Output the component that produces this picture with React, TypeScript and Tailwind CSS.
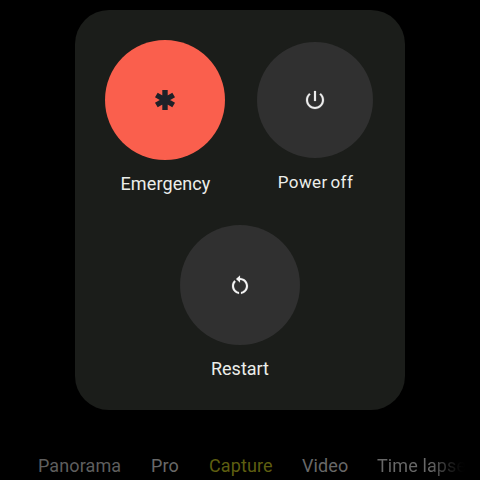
import type { ReactNode } from 'react';
import clsx from 'clsx';

function EmergencyIcon() {
  return (
    <svg viewBox="0 0 24 24" className="w-6 h-6" fill="none" stroke="currentColor" strokeWidth="5.4">
      <path d="M12 2v20M3.34 7l17.32 10M3.34 17L20.66 7" />
    </svg>
  );
}

function PowerIcon() {
  return (
    <svg viewBox="0 0 24 24" className="w-6 h-6" fill="currentColor" stroke="currentColor" strokeWidth="0.2">
      <path d="M13 3h-2v10h2V3zm4.83 2.17l-1.42 1.42C17.99 7.86 19 9.81 19 12c0 3.87-3.13 7-7 7s-7-3.13-7-7c0-2.19 1.01-4.14 2.58-5.42L6.17 5.17C4.23 6.82 3 9.26 3 12c0 4.97 4.03 9 9 9s9-4.03 9-9c0-2.74-1.23-5.18-3.17-6.83z" />
    </svg>
  );
}

function RestartIcon() {
  return (
    <svg viewBox="0 0 24 24" className="w-6 h-6" fill="currentColor" stroke="currentColor" strokeWidth="0.15">
      <path d="M12 5V2.6L8 6l4 3.6V7c3.31 0 6 2.69 6 6 0 2.97-2.17 5.43-5 5.91v2.02c3.95-.49 7-3.85 7-7.93 0-4.42-3.58-8-8-8zm-6 8c0-1.65.67-3.15 1.76-4.24L6.34 7.34C4.9 8.79 4 10.79 4 13c0 4.08 3.05 7.44 7 7.93v-2.02c-2.83-.48-5-2.94-5-5.91z" />
    </svg>
  );
}

type PowerActionProps = {
  label: string;
  circle: string;
  text: string;
  children: ReactNode;
};

function PowerAction({ label, circle, text, children }: PowerActionProps) {
  return (
    <button className="flex w-[120px] flex-col items-center">
      <span className={clsx('flex shrink-0 items-center justify-center rounded-full', circle)}>
        {children}
      </span>
      <span className={clsx('whitespace-nowrap text-[#eceeea]', text)}>{label}</span>
    </button>
  );
}

const modes = [
  { name: 'Panorama', style: 'w-[113px] text-[#5e5e5e]' },
  { name: 'Pro', style: 'w-[58px] text-[#686868]' },
  { name: 'Capture', style: 'w-[93px] text-[#5e5e10]' },
  { name: 'Video', style: 'w-[75px] text-[#686868]' },
  {
    name: 'Time lapse',
    style: 'bg-linear-to-r from-[#686868] from-[54px] to-black to-[92px] bg-clip-text text-transparent',
  },
];

export default function App() {
  return (
    <div className="flex h-screen w-full flex-col items-center overflow-hidden bg-black pt-[10px] font-['Roboto',sans-serif]">
      <div className="h-[400px] w-[330px] shrink-0 rounded-[34px] bg-[#1b1d1a] px-[30px] pt-[30px]">
        <div className="flex h-[185px] justify-between">
          <PowerAction
            label="Emergency"
            circle="h-[120px] w-[120px] bg-[#fa5f4d] text-[#1e2128]"
            text="mt-3 pl-px text-[18px] leading-6 tracking-[0.1px]"
          >
            <EmergencyIcon />
          </PowerAction>
          <PowerAction
            label="Power off"
            circle="mt-[2.4px] h-[116px] w-[116px] bg-[#303030] text-[#eeeeee]"
            text="mt-[11.6px] pl-px text-[17px] leading-6 tracking-[0.45px] [word-spacing:-2px]"
          >
            <PowerIcon />
          </PowerAction>
        </div>
        <div className="flex justify-center">
          <PowerAction
            label="Restart"
            circle="h-[120px] w-[120px] bg-[#303030] text-[#f4f4f4]"
            text="mt-3 text-[18px] leading-6"
          >
            <RestartIcon />
          </PowerAction>
        </div>
      </div>

      {/* Camera mode strip behind the menu */}
      <div className="mt-[44px] flex w-full pl-[38px] text-[18px] leading-6 tracking-[0.1px]">
        {modes.map((mode) => (
          <span key={mode.name} className={clsx('shrink-0 whitespace-nowrap', mode.style)}>
            {mode.name}
          </span>
        ))}
      </div>
    </div>
  );
}
